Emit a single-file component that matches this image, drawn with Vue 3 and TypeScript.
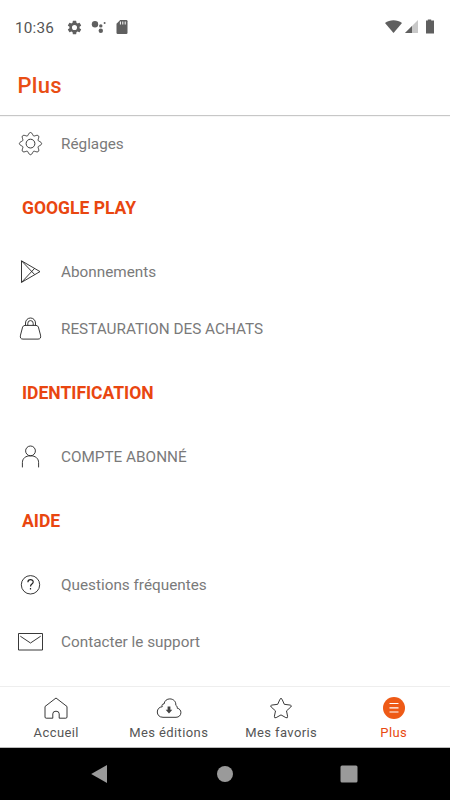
<script setup lang="ts">
type IconName = 'gear' | 'play' | 'bag' | 'person' | 'help' | 'mail'
interface Entry {
  kind: 'row' | 'section'
  label: string
  icon?: IconName
}

const entries: Entry[] = [
  { kind: 'row', label: 'Réglages', icon: 'gear' },
  { kind: 'section', label: 'GOOGLE PLAY' },
  { kind: 'row', label: 'Abonnements', icon: 'play' },
  { kind: 'row', label: 'RESTAURATION DES ACHATS', icon: 'bag' },
  { kind: 'section', label: 'IDENTIFICATION' },
  { kind: 'row', label: 'COMPTE ABONNÉ', icon: 'person' },
  { kind: 'section', label: 'AIDE' },
  { kind: 'row', label: 'Questions fréquentes', icon: 'help' },
  { kind: 'row', label: 'Contacter le support', icon: 'mail' },
]

// Outline of the settings cog: eight rounded teeth around (13, 13).
const cogPath = (() => {
  const points: string[] = []
  for (let i = 0; i < 160; i++) {
    const a = (i / 160) * Math.PI * 2
    const c = Math.cos(8 * a)
    const r = 9.7 + 1.4 * c
    points.push(`${(13 + r * Math.sin(a)).toFixed(2)} ${(13 - r * Math.cos(a)).toFixed(2)}`)
  }
  return `M${points.join('L')}Z`
})()
</script>

<template>
  <div class="screen">
    <div class="status">
      <span class="clock">10:36</span>
      <svg class="s-gear" width="17" height="17" viewBox="0 0 24 24"><path d="M19.14 12.94c.04-.3.06-.61.06-.94s-.02-.64-.07-.94l2.03-1.58a.49.49 0 0 0 .12-.61l-1.92-3.32a.49.49 0 0 0-.59-.22l-2.39.96a7 7 0 0 0-1.62-.94l-.36-2.54a.48.48 0 0 0-.48-.41h-3.84a.48.48 0 0 0-.47.41l-.36 2.54c-.59.24-1.13.57-1.62.94l-2.39-.96a.48.48 0 0 0-.59.22L2.74 8.87a.47.47 0 0 0 .12.61l2.03 1.58a6 6 0 0 0 0 1.88l-2.03 1.58a.49.49 0 0 0-.12.61l1.92 3.32c.12.22.37.29.59.22l2.39-.96c.5.38 1.03.7 1.62.94l.36 2.54c.05.24.24.41.48.41h3.84c.24 0 .44-.17.47-.41l.36-2.54c.59-.24 1.13-.56 1.62-.94l2.39.96c.22.08.47 0 .59-.22l1.92-3.32a.47.47 0 0 0-.12-.61zM12 15.6a3.6 3.6 0 1 1 0-7.2 3.6 3.6 0 0 1 0 7.2z" /></svg>
      <svg class="s-dots" width="16" height="14" viewBox="0 0 16 14"><circle cx="4" cy="4.3" r="3.2" /><circle cx="9.8" cy="5.9" r="1.7" /><circle cx="9.8" cy="10.8" r="2.2" /><circle cx="13.6" cy="2.9" r="1" /></svg>
      <svg class="s-card" width="12" height="16" viewBox="0 0 12 16"><path d="M4.2 1H10.3Q11.5 1 11.5 2.2V13.8Q11.5 15 10.3 15H1.7Q.5 15 .5 13.8V4.7Z" /><path d="M4.4 2.5V5.5M6.8 2.5V5.5M9.2 2.5V5.5" class="slots" /></svg>
      <span class="grow"></span>
      <svg width="50" height="16" viewBox="0 0 50 16">
        <path d="M0 4C4.7.3 12.3.3 17 4L8.5 14Z" />
        <path d="M33 1V14H20Z" class="faint" /><path d="M27 7V14H20Z" />
        <path d="M42.8 .5H46.2V1.5H49V14.5H41V1.5H42.8Z" />
      </svg>
    </div>
    <header class="title"><h1>Plus</h1></header>
    <main class="list">
      <div v-for="e in entries" :key="e.label" :class="e.kind">
        <span v-if="e.icon" class="icon">
          <svg width="26" height="26" viewBox="-0.5 0.4 26 26">
            <template v-if="e.icon === 'gear'"><path :d="cogPath" /><circle cx="13" cy="13" r="4.4" /></template>
            <template v-else-if="e.icon === 'play'"><path d="M4 2.2V23.8L22.5 13ZM4 2.2L17.2 16M4 23.8L17.2 9.7" /></template>
            <template v-else-if="e.icon === 'bag'"><path d="M7.5 9.8H18.5Q20.2 9.8 20.9 11.5L23 19.5Q23.9 23.5 20.5 23.5H5.5Q2.1 23.5 3 19.5L5.1 11.5Q5.8 9.8 7.5 9.8Z" /><path d="M8 9.8V7.4A5 5 0 0 1 18 7.4V9.8M10.3 9.8V7.7A2.7 2.7 0 0 1 15.7 7.7V9.8" /></template>
            <template v-else-if="e.icon === 'person'"><circle cx="13" cy="7.3" r="4.9" /><path d="M4.9 23.8V19C4.9 14.8 8 12.2 13 12.2S21.1 14.8 21.1 19V23.8" /></template>
            <template v-else-if="e.icon === 'help'"><circle cx="13" cy="13.2" r="9.2" /><path class="bold" d="M10.4 10.7C10.4 7.2 15.8 7.3 15.7 10.5C15.7 12.5 13 12.5 13 14.8M13 16.4V18" /></template>
            <template v-else><path d="M1 4.9H25V21.4H1ZM2.8 7.6L13 14.4L23.2 7.6" /></template>
          </svg>
        </span>
        <span class="label">{{ e.label }}</span>
      </div>
    </main>
    <nav class="tabs">
      <a class="tab">
        <svg width="26" height="26" viewBox="0 0 26 26"><path d="M13 3L24 11.5V22Q24 23.2 22.8 23.2H16.2V18.8Q16.2 16.2 13 16.2T9.8 18.8V23.2H3.2Q2 23.2 2 22V11.5Z" /></svg>
        <span>Accueil</span>
      </a>
      <a class="tab">
        <svg width="26" height="26" viewBox="0 0 26 26"><path d="M7 22.3C3.2 22.3 1.3 19.8 1.3 17C1.3 14.1 3.2 12 6.3 11.7C5.4 10.2 6.5 8.6 8 9C8.5 5.6 11 3.9 13.8 3.9C17.5 3.9 20.2 6.6 19.8 10.3C21.5 11.5 21.4 12.3 21.1 13.1C23.7 13.7 24.9 15.4 24.9 17.6C24.9 20.3 23 22.3 20 22.3Z" /><path class="arrow" d="M11.6 11.5H14.4V14.8H16.3L13 18.6L9.7 14.8H11.6Z" /></svg>
        <span>Mes éditions</span>
      </a>
      <a class="tab">
        <svg width="26" height="26" viewBox="0 0 26 26"><path d="M12 4.2Q13 2.3 14 4.2L16.3 9.3L22.3 10.1Q24.2 10.6 22.8 12L18.5 15.9L19.6 21.3Q19.8 23.6 17.8 22.6L13 19.9L8.2 22.6Q6.2 23.6 6.4 21.3L7.5 15.9L3.2 12Q1.8 10.6 3.7 10.1L9.7 9.3Z" /></svg>
        <span>Mes favoris</span>
      </a>
      <a class="tab active">
        <svg width="26" height="26" viewBox="0 0 26 26"><circle cx="13" cy="13" r="11" /><path d="M8.5 8.5H17.5M8.5 12.8H17.5M8.5 17H17.5" /></svg>
        <span>Plus</span>
      </a>
    </nav>
    <div class="system">
      <svg width="20" height="20" viewBox="0 0 20 20"><path d="M1.2 10L17 1V19Z" /></svg>
      <svg width="20" height="20" viewBox="0 0 20 20"><circle cx="10" cy="10" r="8" /></svg>
      <svg width="20" height="20" viewBox="0 0 20 20"><rect x="1.5" y="1.5" width="17" height="17" rx="1.5" /></svg>
    </div>
  </div>
</template>

<style>
body { margin: 0; background: #fff; }
</style>

<style scoped>
.screen {
  width: 450px;
  height: 800px;
  display: flex;
  flex-direction: column;
  overflow: hidden;
  background: #fff;
  font-family: Roboto, "Liberation Sans", sans-serif;
}
.screen svg { display: block; flex: none; }
.status {
  height: 54px;
  flex: none;
  display: flex;
  align-items: center;
  padding: 0 15px;
  box-sizing: border-box;
  fill: #5f5f5f;
}
.clock { width: 50.5px; padding-top: 1px; font-size: 15.3px; letter-spacing: 0.2px; color: #555; }
.s-dots { margin-left: 8.5px; }
.s-card { margin-left: 9px; }
.slots { stroke: #fff; stroke-width: 1; }
.faint { fill: #c8c8c8; }
.grow { flex: 1; }
.title {
  height: 61px;
  flex: none;
  display: flex;
  align-items: center;
  padding: 2px 0 0 17.5px;
  box-sizing: border-box;
  box-shadow: 0 1px 1px rgba(0, 0, 0, 0.22);
}
h1 { margin: 0; font-size: 22px; line-height: 26px; font-weight: 500; letter-spacing: 0.3px; color: #e94e14; }
.list { flex: 1; min-height: 0; }
.row { height: 57px; display: flex; align-items: center; }
.icon { width: 44px; padding-left: 17px; flex: none; }
.icon svg { fill: none; stroke: #222; stroke-width: 0.9; stroke-linejoin: round; }
.icon .bold { stroke-width: 1.2; }
.label { white-space: nowrap; }
.row .label { font-size: 15.3px; padding-top: 1px; color: #7a7a7a; }
.section { height: 71px; display: flex; align-items: center; padding-left: 22px; font-size: 17.5px; font-weight: 700; color: #e94610; }
.tabs {
  height: 62px;
  flex: none;
  display: grid;
  grid-template-columns: repeat(4, 1fr);
  border-top: 1px solid #eee;
  border-bottom: 1px solid #bbb;
  box-sizing: border-box;
}
.tab { display: flex; flex-direction: column; align-items: center; padding-top: 8px; font-size: 13px; line-height: 16px; letter-spacing: 0.4px; color: #555; }
.tab span { margin-top: 4px; }
.tab svg { fill: none; stroke: #222; stroke-width: 0.9; }
.tab .arrow { fill: #444; stroke: none; }
.tab.active { color: #e84910; }
.active circle { fill: #ee5a16; stroke: none; }
.active path { stroke: #fff; stroke-width: 1.2; }
.system {
  height: 52px;
  flex: none;
  display: flex;
  justify-content: space-between;
  align-items: center;
  padding: 0 91px 0 90px;
  box-sizing: border-box;
  background: #000;
  fill: #9a9a9a;
}
</style>
